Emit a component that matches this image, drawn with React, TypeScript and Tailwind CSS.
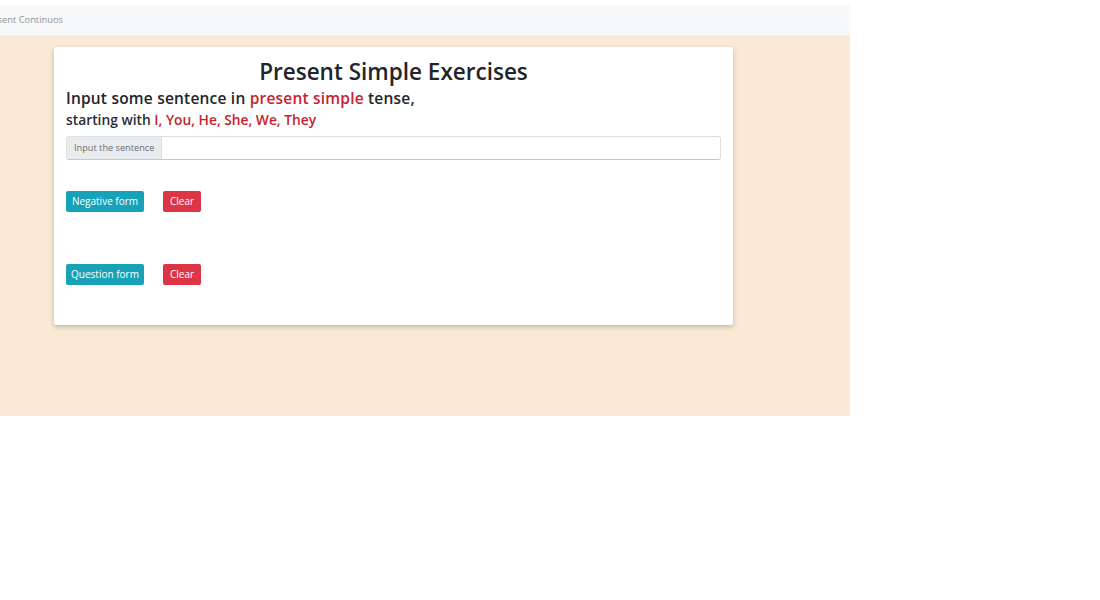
export default function App() {
    return (
        <div className="w-[850px] pt-[5px]" style={{ fontFamily: '"Open Sans", "Noto Sans", sans-serif' }}>
            {/* Navbar */}
            <div className="h-[30px] bg-[#f8f9fa] overflow-hidden flex items-center">
                <span className="-ml-[17px] text-[9.3px] text-[#909396] whitespace-nowrap">Present Continuos</span>
            </div>

            {/* Main */}
            <div className="bg-[#f9e9d5] h-[381px] pt-[12px] pl-[54px]">
                <div className="w-[679px] h-[278px] bg-white rounded-[2px] shadow-[0_2px_5px_rgba(0,0,0,0.22)] px-[12px] pt-[10px]">
                    <h1 className="text-center text-[22.5px] font-semibold text-[#212529] leading-[30px]">Present Simple Exercises</h1>
                    <p className="text-[15.5px] font-semibold text-[#212529] leading-[21px] mt-[1px] tracking-[0.2px]">
                        Input some sentence in <span className="text-[#c8232c]">present simple</span> tense,
                    </p>
                    <p className="text-[13.8px] font-semibold text-[#2a2e33] leading-[21px]">
                        starting with <span className="text-[#c8232c]">I, You, He, She, We, They</span>
                    </p>

                    <div className="mt-[6px] flex h-[24px] border border-[#dcdee2] border-b-[#c3c6d1] rounded-[3px] overflow-hidden">
                        <div className="bg-[#e9ecef] px-[7px] flex items-center text-[9.2px] text-[#6c6f73] border-r border-[#dcdee2] whitespace-nowrap">Input the sentence</div>
                        <input className="flex-1 outline-none px-2 text-[10px]" />
                    </div>

                    <div className="mt-[31px] flex gap-[19px]">
                        <button className="h-[21px] w-[78px] bg-[#17a2b8] text-white text-[10px] rounded-[2px]">Negative form</button>
                        <button className="h-[21px] w-[38px] bg-[#dc3545] text-white text-[10px] rounded-[2px]">Clear</button>
                    </div>

                    <div className="mt-[52px] flex gap-[19px]">
                        <button className="h-[21px] w-[78px] bg-[#17a2b8] text-white text-[10px] rounded-[2px]">Question form</button>
                        <button className="h-[21px] w-[38px] bg-[#dc3545] text-white text-[10px] rounded-[2px]">Clear</button>
                    </div>
                </div>
            </div>
        </div>
    );
}
